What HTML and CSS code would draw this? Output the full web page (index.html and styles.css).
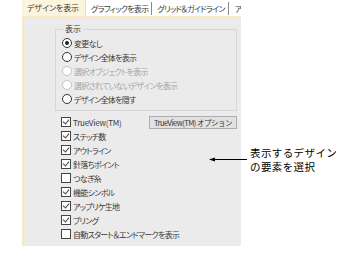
FILE: index.html
```html
<!DOCTYPE html>
<html lang="ja">
<head>
    <meta charset="UTF-8">
    <title>デザインを表示</title>
    <link rel="stylesheet" href="styles.css">
</head>
<body>

<div class="dialog">
    <div class="tabs">
        <div class="tab active">デザインを表示</div>
        <div class="tab">グラフィックを表示</div>
        <div class="tab">グリッド＆ガイドライン</div>
        <div class="tab">ア</div>
    </div>

    <div class="panel">
        <fieldset class="group">
            <legend>表示</legend>
            <label class="opt"><span class="radio on"></span>変更なし</label>
            <label class="opt"><span class="radio"></span>デザイン全体を表示</label>
            <label class="opt off"><span class="radio"></span>選択オブジェクトを表示</label>
            <label class="opt off"><span class="radio"></span>選択されていないデザインを表示</label>
            <label class="opt"><span class="radio"></span>デザイン全体を隠す</label>
        </fieldset>

        <div class="checks">
            <div class="row-top">
                <label class="opt latin"><span class="check on"></span>TrueView(TM)</label>
                <button class="btn">TrueView(TM) オプション</button>
            </div>
            <label class="opt"><span class="check on"></span>ステッチ数</label>
            <label class="opt"><span class="check on"></span>アウトライン</label>
            <label class="opt"><span class="check on"></span>針落ちポイント</label>
            <label class="opt"><span class="check"></span>つなぎ糸</label>
            <label class="opt"><span class="check on"></span>機能シンボル</label>
            <label class="opt"><span class="check on"></span>アップリケ生地</label>
            <label class="opt"><span class="check on"></span>ブリング</label>
            <label class="opt"><span class="check"></span>自動スタート＆エンドマークを表示</label>
        </div>
    </div>
</div>

<div class="callout">
    <svg class="arrow" width="38" height="7" viewBox="0 0 38 7">
        <path d="M0 3.5 L6 1.5 L6 5.5 Z" fill="#000"/>
        <line x1="4" y1="3.5" x2="38" y2="3.5" stroke="#000" stroke-width="1"/>
    </svg>
    <div class="note">表示するデザイン<br>の要素を選択</div>
</div>

</body>
</html>
```

FILE: styles.css
```css
body {
    margin: 0;
    background: #fff;
    font-family: "Noto Sans CJK JP", "Noto Sans", sans-serif;
    font-feature-settings: "palt";
    color: #333;
    position: relative;
    width: 362px;
    height: 262px;
    overflow: hidden;
}
.dialog {
    margin-left: 22px;
    width: 219px;
}
.tabs {
    display: flex;
    height: 16px;
    border-bottom: 2px solid #fbe8c3;
    font-size: 8px;
    white-space: nowrap;
    overflow: hidden;
}
.tab {
    padding: 0 3px 0 5px;
    border-right: 1px solid #888;
    margin: 2px 0 0;
    line-height: 13px;
    height: 13px;
    color: #3a3a3a;
    letter-spacing: -0.7px;
    flex: none;
}
.tab:last-child { border-right: none; padding-left: 6px; }
.tab.active {
    margin: 0;
    height: 16px;
    line-height: 16px;
    background: #fdf4de;
    border-right: 1px solid #ddd;
    padding: 0 6px 0 5px;
    letter-spacing: -0.1px;
}
.panel {
    background: #ebebeb;
    border-left: 2px solid #fbe6bd;
    height: 228px;
    padding: 6px 4px 0 31px;
    box-sizing: border-box;
}
.group {
    margin: 0;
    padding: 2px 0 4px 6px;
    border: 1px solid #d6d6d6;
    width: 182px;
    box-sizing: border-box;
}
.group legend {
    font-size: 8px;
    padding: 0 2px;
    margin-left: 1px;
    line-height: 10px;
    color: #3a3a3a;
}
.opt {
    display: flex;
    align-items: center;
    height: 14px;
    font-size: 8px;
    letter-spacing: -0.7px;
    white-space: nowrap;
    color: #3a3a3a;
}
.opt.latin {
    font-size: 8px;
    letter-spacing: -0.2px;
}
.opt.off { color: #a3a3a3; }
.radio {
    width: 8px;
    height: 8px;
    border: 1px solid #333;
    border-radius: 50%;
    margin-right: 2px;
    background: #fff;
    position: relative;
    flex: none;
}
.opt.off .radio { border-color: #c4c4c4; }
.radio.on::after {
    content: "";
    position: absolute;
    left: 2px;
    top: 2px;
    width: 4px;
    height: 4px;
    border-radius: 50%;
    background: #222;
}
.checks {
    padding: 4px 0 0 6px;
}
.row-top {
    display: flex;
    justify-content: space-between;
    align-items: center;
    width: 176px;
}
.check {
    width: 8px;
    height: 8px;
    border: 1px solid #444;
    background: #fff;
    margin-right: 2px;
    position: relative;
    flex: none;
}
.check.on::after {
    content: "";
    position: absolute;
    left: 2px;
    top: 0;
    width: 3px;
    height: 5px;
    border: solid #444;
    border-width: 0 1px 1px 0;
    transform: rotate(40deg);
}
.btn {
    font-family: inherit;
    font-size: 7.5px;
    height: 13px;
    padding: 0 4px;
    line-height: 11px;
    border: 1px solid #adadad;
    background: #e1e1e1;
    color: #333;
    letter-spacing: -0.5px;
    white-space: nowrap;
}
.callout {
    position: absolute;
    left: 209px;
    top: 146px;
    display: flex;
    align-items: center;
}
.arrow {
    margin-top: -1px;
}
.note {
    font-size: 10.5px;
    line-height: 14px;
    color: #000;
    margin-left: 3px;
    font-feature-settings: normal;
    letter-spacing: 0.4px;
}
```
